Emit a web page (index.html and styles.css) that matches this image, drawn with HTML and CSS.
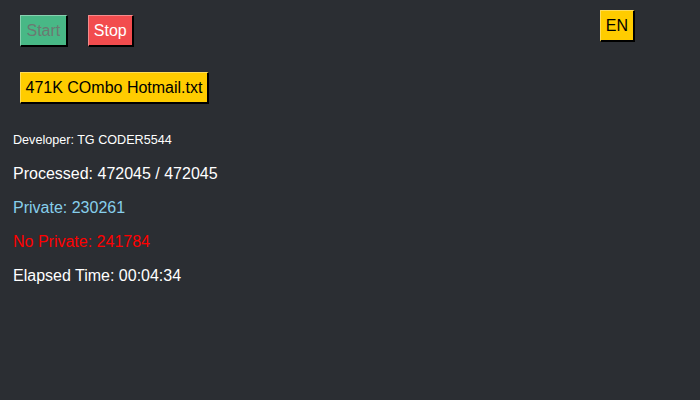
FILE: index.html
```html
<!DOCTYPE html>
<html>
<head>
<meta charset="utf-8">
<link rel="stylesheet" href="styles.css">
</head>
<body>
<div class="app">
  <div class="toolbar">
    <button class="btn btn-start">Start</button>
    <button class="btn btn-stop">Stop</button>
    <button class="btn btn-lang">EN</button>
  </div>
  <div class="file-row">
    <button class="btn btn-file">471K COmbo Hotmail.txt</button>
  </div>
  <div class="stats">
    <div class="dev">Developer: TG CODER5544</div>
    <div class="stat">Processed: 472045 / 472045</div>
    <div class="stat private">Private: 230261</div>
    <div class="stat noprivate">No Private: 241784</div>
    <div class="stat">Elapsed Time: 00:04:34</div>
  </div>
</div>
</body>
</html>
```
FILE: styles.css
```css
html, body {
  margin: 0;
  padding: 0;
  background: #2b2e33;
  width: 700px;
  height: 400px;
  overflow: hidden;
  font-family: "Liberation Sans", Arial, sans-serif;
}
.app {
  padding: 10px 0 0 20px;
}
.toolbar {
  display: flex;
  align-items: flex-start;
  height: 37px;
}
.btn {
  font-family: "Liberation Sans", Arial, sans-serif;
  font-size: 16px;
  height: 32px;
  padding: 0 5.5px;
  margin: 0;
  border-style: solid;
  border-width: 1px 2px 2px 1px;
  border-color: rgba(255,255,255,0.35) #000 #000 rgba(255,255,255,0.35);
  cursor: pointer;
}
.btn-start {
  margin-top: 5px;
  background: #48b886;
  color: #6b7a72;
}
.btn-stop {
  margin-top: 5px;
  margin-left: 20px;
  background: #f24c4e;
  color: #ffffff;
  padding: 0 5px;
}
.btn-lang {
  margin-left: 466px;
  background: #ffcc00;
  color: #000;
  padding: 0 5px;
}
.file-row {
  margin-top: 25px;
}
.btn-file {
  background: #ffcc00;
  color: #000;
  height: 32px;
  padding: 0 4.5px;
}
.stats {
  margin-left: -7px;
  padding-top: 29px;
  color: #ffffff;
}
.dev {
  font-size: 12.6px;
  line-height: 14px;
  height: 14px;
}
.stat {
  font-size: 16px;
  line-height: 18px;
  height: 18px;
  margin-top: 16px;
}
.stats .dev + .stat {
  margin-top: 18px;
}
.private {
  color: #87ceeb;
}
.noprivate {
  color: #ff0000;
}
```
